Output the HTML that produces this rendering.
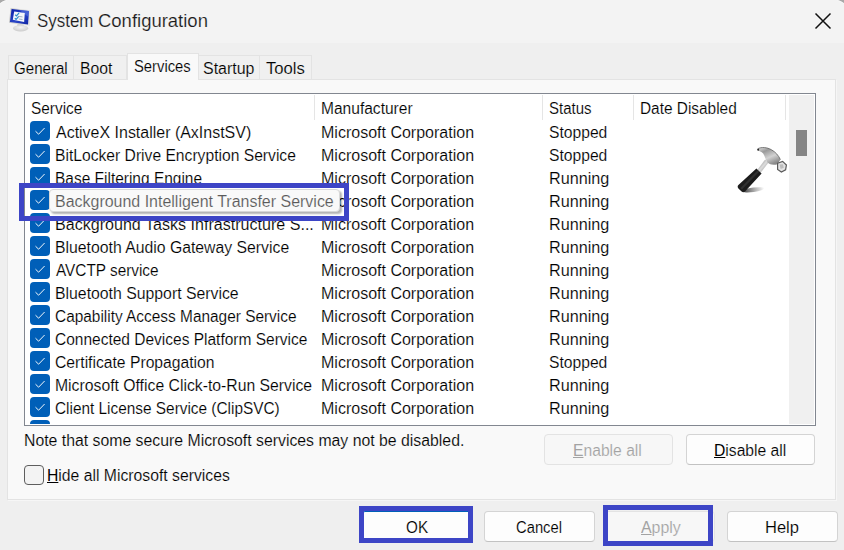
<!DOCTYPE html>
<html><head><meta charset="utf-8">
<style>
*{margin:0;padding:0;box-sizing:border-box}
html,body{width:844px;height:550px;overflow:hidden;background:#efefef}
body{position:relative;font-family:"Liberation Sans",sans-serif;font-size:16px;color:#000}
.a{position:absolute;white-space:nowrap;line-height:16px;transform-origin:0 0}
.b{position:absolute}
#title{left:0;top:0;width:844px;height:43px;background:#f3f3f3}
.tab{position:absolute;top:55px;height:24px;background:#f0f0f0;border:1px solid #e3e3e3;border-bottom:none}
.tab.sel{top:53px;height:27px;background:#f9f9f9;z-index:2}
#panel{left:7px;top:79px;width:829px;height:421px;background:#f9f9f9;border:1px solid #e3e3e3;box-shadow:1px 1px 0 #f6f6f6}
#list{left:24px;top:93px;width:792px;height:333px;background:#fff;border:1px solid #828790;overflow:hidden;z-index:1}
.cb{position:absolute;left:30px;width:20px;height:20px;background:#005fb8;border-radius:4px}
.cb svg{position:absolute;left:0;top:0}
.dv{position:absolute;top:95px;width:1px;height:25px;background:#e5e5e5;z-index:3}
.btn{position:absolute;height:31px;background:#fdfdfd;border:1px solid #d4d4d4;border-bottom-color:#c2c2c2;border-radius:4px;z-index:2}
.dis{background:#f7f7f7;border-color:#e3e3e3}
.ann{position:absolute;border:5px solid #3d45c6;z-index:20}
u{text-decoration:underline;text-decoration-thickness:1px;text-underline-offset:1px;-webkit-text-stroke:0}
</style></head><body>
<div id="title" class="b"></div>
<svg class="b" style="left:6px;top:4px" width="30" height="30" viewBox="6 4 30 30">
  <defs>
    <linearGradient id="bz" x1="0" y1="0" x2="1" y2="1"><stop offset="0" stop-color="#0a1fa8"/><stop offset=".55" stop-color="#2a46c8"/><stop offset="1" stop-color="#0d22a0"/></linearGradient>
    <radialGradient id="st" cx=".5" cy=".35" r=".65"><stop offset="0" stop-color="#f4f4f4"/><stop offset="1" stop-color="#cbcbcb"/></radialGradient>
    <linearGradient id="fr" x1="0" y1="0" x2="1" y2="0"><stop offset="0" stop-color="#c8c8c8"/><stop offset="1" stop-color="#e6e6e6"/></linearGradient>
  </defs>
  <path d="M17.5 23.5 L23.5 24.3 L24 27 L17 26.5 Z" fill="#d4d4d4"/>
  <ellipse cx="20.6" cy="28.3" rx="7.6" ry="3.1" fill="url(#st)"/>
  <path d="M10.6 8.1 L30.6 10.2 L30 25.8 L9 22.8 Z" fill="url(#fr)"/>
  <path d="M11.6 9.1 L29 11 L28 24.6 L9.9 22 Z" fill="url(#bz)"/>
  <path d="M19 10 L29 11 L28.6 17 Z" fill="#5d78e0" opacity=".55"/>
  <path d="M14.2 11.6 L24.8 13 L24.1 22 L12.8 19.8 Z" fill="#f4f6fa"/>
  <path d="M15.2 14.8 l1.3 1.1 l2.6 -3" stroke="#2b8ccc" stroke-width="1.2" fill="none"/>
  <path d="M14.8 18.2 l1.3 1.1 l2.6 -3" stroke="#2b8ccc" stroke-width="1.2" fill="none"/>
  <path d="M18.3 16.4 L22.5 16.9 M18.8 19 L22.5 19.5" stroke="#8aa0b8" stroke-width=".8"/>
</svg>
<svg class="b" style="left:813.5px;top:11.8px" width="18" height="18" viewBox="0 0 18 18"><path d="M1.5 1.5 L16.5 16.5 M16.5 1.5 L1.5 16.5" stroke="#111" stroke-width="1.5"/></svg>

<div id="panel" class="b"></div>
<div class="tab" style="left:8px;width:66px"></div>
<div class="tab" style="left:73px;width:54px"></div>
<div class="tab sel" style="left:127px;width:72px"></div>
<div class="tab" style="left:198px;width:62px"></div>
<div class="tab" style="left:259px;width:53px"></div>

<div id="list" class="b"></div>
<div class="dv" style="left:314px"></div>
<div class="dv" style="left:542px"></div>
<div class="dv" style="left:633px"></div>
<div class="dv" style="left:785px"></div>
<div class="b" style="left:789px;top:95px;width:25px;height:329px;background:#f0f0f0;z-index:3"></div>
<div class="b" style="left:796px;top:130px;width:11px;height:26px;background:#858585;z-index:3"></div>
<div class="b" style="left:0;top:94px;width:815px;height:330px;overflow:hidden;z-index:4">
<div class="cb" style="top:27px"><svg width="20" height="20" viewBox="0 0 20 20"><path d="M5.5 10.2 L8.6 13.2 L14.6 7" stroke="#fff" stroke-width="0.95" fill="none"/></svg></div>
<div class="cb" style="top:50px"><svg width="20" height="20" viewBox="0 0 20 20"><path d="M5.5 10.2 L8.6 13.2 L14.6 7" stroke="#fff" stroke-width="0.95" fill="none"/></svg></div>
<div class="cb" style="top:73px"><svg width="20" height="20" viewBox="0 0 20 20"><path d="M5.5 10.2 L8.6 13.2 L14.6 7" stroke="#fff" stroke-width="0.95" fill="none"/></svg></div>
<div class="cb" style="top:96px"><svg width="20" height="20" viewBox="0 0 20 20"><path d="M5.5 10.2 L8.6 13.2 L14.6 7" stroke="#fff" stroke-width="0.95" fill="none"/></svg></div>
<div class="cb" style="top:119px"><svg width="20" height="20" viewBox="0 0 20 20"><path d="M5.5 10.2 L8.6 13.2 L14.6 7" stroke="#fff" stroke-width="0.95" fill="none"/></svg></div>
<div class="cb" style="top:142px"><svg width="20" height="20" viewBox="0 0 20 20"><path d="M5.5 10.2 L8.6 13.2 L14.6 7" stroke="#fff" stroke-width="0.95" fill="none"/></svg></div>
<div class="cb" style="top:165px"><svg width="20" height="20" viewBox="0 0 20 20"><path d="M5.5 10.2 L8.6 13.2 L14.6 7" stroke="#fff" stroke-width="0.95" fill="none"/></svg></div>
<div class="cb" style="top:188px"><svg width="20" height="20" viewBox="0 0 20 20"><path d="M5.5 10.2 L8.6 13.2 L14.6 7" stroke="#fff" stroke-width="0.95" fill="none"/></svg></div>
<div class="cb" style="top:211px"><svg width="20" height="20" viewBox="0 0 20 20"><path d="M5.5 10.2 L8.6 13.2 L14.6 7" stroke="#fff" stroke-width="0.95" fill="none"/></svg></div>
<div class="cb" style="top:234px"><svg width="20" height="20" viewBox="0 0 20 20"><path d="M5.5 10.2 L8.6 13.2 L14.6 7" stroke="#fff" stroke-width="0.95" fill="none"/></svg></div>
<div class="cb" style="top:257px"><svg width="20" height="20" viewBox="0 0 20 20"><path d="M5.5 10.2 L8.6 13.2 L14.6 7" stroke="#fff" stroke-width="0.95" fill="none"/></svg></div>
<div class="cb" style="top:280px"><svg width="20" height="20" viewBox="0 0 20 20"><path d="M5.5 10.2 L8.6 13.2 L14.6 7" stroke="#fff" stroke-width="0.95" fill="none"/></svg></div>
<div class="cb" style="top:303px"><svg width="20" height="20" viewBox="0 0 20 20"><path d="M5.5 10.2 L8.6 13.2 L14.6 7" stroke="#fff" stroke-width="0.95" fill="none"/></svg></div>
<div class="cb" style="top:326px"><svg width="20" height="20" viewBox="0 0 20 20"><path d="M5.5 10.2 L8.6 13.2 L14.6 7" stroke="#fff" stroke-width="0.95" fill="none"/></svg></div>
</div>

<div class="b" style="left:24px;top:465px;width:20px;height:20px;border:1px solid #5e5e5e;border-radius:4px;background:#f3f3f3"></div>

<div class="btn dis" style="left:544px;top:434px;width:129px"></div>
<div class="btn" style="left:686px;top:434px;width:129px"></div>

<div class="btn" style="left:361px;top:511px;width:111px;border-color:#005fb8"></div>
<div class="btn" style="left:484px;top:511px;width:111px"></div>
<div class="btn dis" style="left:604px;top:511px;width:111px"></div>
<div class="btn" style="left:727px;top:511px;width:111px"></div>

<div class="b" style="left:49px;top:189px;width:291px;height:23px;background:#f9f9f9;border:1px solid #d8d8d8;border-radius:4px;box-shadow:2px 2px 2px rgba(0,0,0,.3);z-index:11"></div>

<div class="ann" style="left:19px;top:183px;width:330px;height:38px"></div>
<div class="ann" style="left:359px;top:506px;width:114px;height:37px"></div>
<div class="ann" style="left:603px;top:505px;width:110px;height:41px"></div>
<svg class="b" style="left:730px;top:140px;z-index:6" width="65" height="60" viewBox="730 140 65 60">
  <defs>
    <linearGradient id="hd" x1="0" y1="0" x2="0.6" y2="1"><stop offset="0" stop-color="#e6e6e6"/><stop offset=".3" stop-color="#9a9a9a"/><stop offset=".65" stop-color="#d2d2d2"/><stop offset="1" stop-color="#8a8a8a"/></linearGradient>
    <linearGradient id="nk" x1="0" y1="0" x2="1" y2="1"><stop offset="0" stop-color="#6d6d6d"/><stop offset=".5" stop-color="#dcdcdc"/><stop offset="1" stop-color="#7d7d7d"/></linearGradient>
    <linearGradient id="sh" x1="0" y1="0" x2="1" y2="0"><stop offset="0" stop-color="#000" stop-opacity=".75"/><stop offset=".5" stop-color="#000" stop-opacity=".35"/><stop offset="1" stop-color="#000" stop-opacity="0"/></linearGradient>
  </defs>
  <ellipse cx="753.5" cy="189.8" rx="11" ry="2.2" fill="url(#sh)" transform="rotate(-8 753.5 189.8)"/>
  <path d="M765.2 159.4 L768.6 162.6 L760.8 172.4 L757.6 169.4 Z" fill="url(#nk)"/>
  <path d="M756.4 168.6 L761.6 173.4 L745 191.4 C744 192.4 742.6 192.4 741.6 191.4 L738.4 188.4 C737.4 187.4 737.4 186 738.4 185 Z" fill="#1c1c1c"/>
  <path d="M757.8 170 L759.4 171.5 L742 189.6 L740.4 188.1 Z" fill="#444" opacity=".5"/>
  <path d="M757 149.6 C759.5 147 766 146.8 771.5 149.8 C775.5 152 778.6 155.6 780.4 159.6 L777.6 164.2 C774 165.4 770 165 767.6 162.6 C765.6 160.4 765 156.6 763.2 153.6 C761.6 151.6 759 151.6 757 149.6 Z" fill="url(#hd)"/>
  <path d="M757.6 148.8 C761.5 146.8 767 147.2 771.5 149.8 C775.5 152 778.6 155.6 780.4 159.6" stroke="#5e5e5e" stroke-width=".8" fill="none"/>
  <circle cx="758.2" cy="149.8" r="1" fill="#2a2a2a"/>
  <path d="M777.6 163.2 L782.6 161.4 L786.4 165 L785.6 169.8 L781.4 172 L777.6 169.4 Z" fill="#e4e4e4" stroke="#5a5a5a" stroke-width="1.2"/>
  <path d="M779.6 164.6 L783 164.2 L783.8 167.8 L780.6 169 Z" fill="#bdbdbd"/>
</svg>
<svg class="b" style="left:0;top:0;z-index:30" width="844" height="8" viewBox="0 0 844 8">
  <path d="M0 0 L7 0 C4.5 0.7 2 1.8 0 3.4 Z" fill="#a9a9a9"/>
  <path d="M7 0.2 C4.5 0.9 2 2 0 3.6" stroke="#fafafa" stroke-width=".8" fill="none"/>
  <path d="M844 0 L837 0 C839.5 0.7 842 1.8 844 3.4 Z" fill="#a9a9a9"/>
  <path d="M837 0.2 C839.5 0.9 842 2 844 3.6" stroke="#fafafa" stroke-width=".8" fill="none"/>
</svg>
<div class="a" style="left:36.64px;top:13px;font-size:17.7px;color:#1b1b1b;z-index:5;transform:scaleX(0.9561);-webkit-text-stroke:0.15px #f3f3f3;">System</div>
<div class="a" style="left:98.16px;top:13px;font-size:17.7px;color:#1b1b1b;z-index:5;transform:scaleX(1.0447);-webkit-text-stroke:0.15px #f3f3f3;">Configuration</div>
<div class="a" style="left:13.66px;top:61px;font-size:16px;color:#000;z-index:5;transform:scaleX(0.9436);-webkit-text-stroke:0.15px #f0f0f0;">General</div>
<div class="a" style="left:79.62px;top:61px;font-size:16px;color:#000;z-index:5;transform:scaleX(0.9813);-webkit-text-stroke:0.15px #f0f0f0;">Boot</div>
<div class="a" style="left:134.28px;top:59px;font-size:16px;color:#000;z-index:5;transform:scaleX(0.9233);-webkit-text-stroke:0.15px #f9f9f9;">Services</div>
<div class="a" style="left:202.60px;top:61px;font-size:16px;color:#000;z-index:5;transform:scaleX(0.9960);-webkit-text-stroke:0.15px #f0f0f0;">Startup</div>
<div class="a" style="left:266.30px;top:61px;font-size:16px;color:#000;z-index:5;transform:scaleX(1.0405);-webkit-text-stroke:0.15px #f0f0f0;">Tools</div>
<div class="a" style="left:31.04px;top:101px;font-size:16px;color:#000;z-index:5;transform:scaleX(0.9615);-webkit-text-stroke:0.15px #fff;">Service</div>
<div class="a" style="left:320.63px;top:101px;font-size:16px;color:#000;z-index:5;transform:scaleX(0.9720);-webkit-text-stroke:0.15px #fff;">Manufacturer</div>
<div class="a" style="left:548.66px;top:101px;font-size:16px;color:#000;z-index:5;transform:scaleX(0.9364);-webkit-text-stroke:0.15px #fff;">Status</div>
<div class="a" style="left:640.04px;top:101px;font-size:16px;color:#000;z-index:5;transform:scaleX(0.9626);-webkit-text-stroke:0.15px #fff;">Date Disabled</div>
<div class="a" style="left:55.80px;top:125px;font-size:16px;color:#000;z-index:5;transform:scaleX(0.9979);-webkit-text-stroke:0.15px #fff;">ActiveX Installer (AxInstSV)</div>
<div class="a" style="left:320.60px;top:125px;font-size:16px;color:#000;z-index:5;transform:scaleX(1.0007);-webkit-text-stroke:0.15px #fff;">Microsoft Corporation</div>
<div class="a" style="left:548.82px;top:125px;font-size:16px;color:#000;z-index:5;transform:scaleX(0.9776);-webkit-text-stroke:0.15px #fff;">Stopped</div>
<div class="a" style="left:54.82px;top:148px;font-size:16px;color:#000;z-index:5;transform:scaleX(0.9780);-webkit-text-stroke:0.15px #fff;">BitLocker Drive Encryption Service</div>
<div class="a" style="left:320.60px;top:148px;font-size:16px;color:#000;z-index:5;transform:scaleX(1.0007);-webkit-text-stroke:0.15px #fff;">Microsoft Corporation</div>
<div class="a" style="left:548.82px;top:148px;font-size:16px;color:#000;z-index:5;transform:scaleX(0.9776);-webkit-text-stroke:0.15px #fff;">Stopped</div>
<div class="a" style="left:54.83px;top:171px;font-size:16px;color:#000;z-index:5;transform:scaleX(0.9669);-webkit-text-stroke:0.15px #fff;">Base Filtering Engine</div>
<div class="a" style="left:320.60px;top:171px;font-size:16px;color:#000;z-index:5;transform:scaleX(1.0007);-webkit-text-stroke:0.15px #fff;">Microsoft Corporation</div>
<div class="a" style="left:548.79px;top:171px;font-size:16px;color:#000;z-index:5;transform:scaleX(1.0121);-webkit-text-stroke:0.15px #fff;">Running</div>
<div class="a" style="left:320.60px;top:194px;font-size:16px;color:#000;z-index:5;transform:scaleX(1.0007);-webkit-text-stroke:0.15px #fff;">Microsoft Corporation</div>
<div class="a" style="left:548.79px;top:194px;font-size:16px;color:#000;z-index:5;transform:scaleX(1.0121);-webkit-text-stroke:0.15px #fff;">Running</div>
<div class="a" style="left:54.80px;top:217px;font-size:16px;color:#000;z-index:5;transform:scaleX(1.0047);-webkit-text-stroke:0.15px #fff;">Background Tasks Infrastructure S...</div>
<div class="a" style="left:320.60px;top:217px;font-size:16px;color:#000;z-index:5;transform:scaleX(1.0007);-webkit-text-stroke:0.15px #fff;">Microsoft Corporation</div>
<div class="a" style="left:548.79px;top:217px;font-size:16px;color:#000;z-index:5;transform:scaleX(1.0121);-webkit-text-stroke:0.15px #fff;">Running</div>
<div class="a" style="left:54.81px;top:240px;font-size:16px;color:#000;z-index:5;transform:scaleX(0.9860);-webkit-text-stroke:0.15px #fff;">Bluetooth Audio Gateway Service</div>
<div class="a" style="left:320.60px;top:240px;font-size:16px;color:#000;z-index:5;transform:scaleX(1.0007);-webkit-text-stroke:0.15px #fff;">Microsoft Corporation</div>
<div class="a" style="left:548.79px;top:240px;font-size:16px;color:#000;z-index:5;transform:scaleX(1.0121);-webkit-text-stroke:0.15px #fff;">Running</div>
<div class="a" style="left:55.80px;top:263px;font-size:16px;color:#000;z-index:5;transform:scaleX(0.9585);-webkit-text-stroke:0.15px #fff;">AVCTP service</div>
<div class="a" style="left:320.60px;top:263px;font-size:16px;color:#000;z-index:5;transform:scaleX(1.0007);-webkit-text-stroke:0.15px #fff;">Microsoft Corporation</div>
<div class="a" style="left:548.79px;top:263px;font-size:16px;color:#000;z-index:5;transform:scaleX(1.0121);-webkit-text-stroke:0.15px #fff;">Running</div>
<div class="a" style="left:54.81px;top:286px;font-size:16px;color:#000;z-index:5;transform:scaleX(0.9880);-webkit-text-stroke:0.15px #fff;">Bluetooth Support Service</div>
<div class="a" style="left:320.60px;top:286px;font-size:16px;color:#000;z-index:5;transform:scaleX(1.0007);-webkit-text-stroke:0.15px #fff;">Microsoft Corporation</div>
<div class="a" style="left:548.79px;top:286px;font-size:16px;color:#000;z-index:5;transform:scaleX(1.0121);-webkit-text-stroke:0.15px #fff;">Running</div>
<div class="a" style="left:54.84px;top:309px;font-size:16px;color:#000;z-index:5;transform:scaleX(0.9631);-webkit-text-stroke:0.15px #fff;">Capability Access Manager Service</div>
<div class="a" style="left:320.60px;top:309px;font-size:16px;color:#000;z-index:5;transform:scaleX(1.0007);-webkit-text-stroke:0.15px #fff;">Microsoft Corporation</div>
<div class="a" style="left:548.79px;top:309px;font-size:16px;color:#000;z-index:5;transform:scaleX(1.0121);-webkit-text-stroke:0.15px #fff;">Running</div>
<div class="a" style="left:54.83px;top:332px;font-size:16px;color:#000;z-index:5;transform:scaleX(0.9687);-webkit-text-stroke:0.15px #fff;">Connected Devices Platform Service</div>
<div class="a" style="left:320.60px;top:332px;font-size:16px;color:#000;z-index:5;transform:scaleX(1.0007);-webkit-text-stroke:0.15px #fff;">Microsoft Corporation</div>
<div class="a" style="left:548.79px;top:332px;font-size:16px;color:#000;z-index:5;transform:scaleX(1.0121);-webkit-text-stroke:0.15px #fff;">Running</div>
<div class="a" style="left:54.82px;top:355px;font-size:16px;color:#000;z-index:5;transform:scaleX(0.9801);-webkit-text-stroke:0.15px #fff;">Certificate Propagation</div>
<div class="a" style="left:320.60px;top:355px;font-size:16px;color:#000;z-index:5;transform:scaleX(1.0007);-webkit-text-stroke:0.15px #fff;">Microsoft Corporation</div>
<div class="a" style="left:548.82px;top:355px;font-size:16px;color:#000;z-index:5;transform:scaleX(0.9776);-webkit-text-stroke:0.15px #fff;">Stopped</div>
<div class="a" style="left:54.82px;top:378px;font-size:16px;color:#000;z-index:5;transform:scaleX(0.9846);-webkit-text-stroke:0.15px #fff;">Microsoft Office Click-to-Run Service</div>
<div class="a" style="left:320.60px;top:378px;font-size:16px;color:#000;z-index:5;transform:scaleX(1.0007);-webkit-text-stroke:0.15px #fff;">Microsoft Corporation</div>
<div class="a" style="left:548.79px;top:378px;font-size:16px;color:#000;z-index:5;transform:scaleX(1.0121);-webkit-text-stroke:0.15px #fff;">Running</div>
<div class="a" style="left:54.84px;top:401px;font-size:16px;color:#000;z-index:5;transform:scaleX(0.9608);-webkit-text-stroke:0.15px #fff;">Client License Service (ClipSVC)</div>
<div class="a" style="left:320.60px;top:401px;font-size:16px;color:#000;z-index:5;transform:scaleX(1.0007);-webkit-text-stroke:0.15px #fff;">Microsoft Corporation</div>
<div class="a" style="left:548.79px;top:401px;font-size:16px;color:#000;z-index:5;transform:scaleX(1.0121);-webkit-text-stroke:0.15px #fff;">Running</div>
<div class="a" style="left:54.50px;top:194px;font-size:16px;color:#5a5a5a;z-index:12;transform:scaleX(0.9982);-webkit-text-stroke:0.15px #f9f9f9;">Background Intelligent Transfer Service</div>
<div class="a" style="left:23.51px;top:433px;font-size:16px;color:#000;z-index:5;transform:scaleX(0.9883);-webkit-text-stroke:0.15px #f9f9f9;">Note that some secure Microsoft services may not be disabled.</div>
<div class="a" style="left:47.02px;top:468px;font-size:16px;color:#000;z-index:5;transform:scaleX(0.9837);-webkit-text-stroke:0.15px #f9f9f9;"><u>H</u>ide all Microsoft services</div>
<div class="a" style="left:573.42px;top:443px;font-size:16px;color:#a3a3a3;z-index:5;transform:scaleX(0.9794);-webkit-text-stroke:0.15px #f7f7f7;"><u>E</u>nable all</div>
<div class="a" style="left:713.52px;top:443px;font-size:16px;color:#000;z-index:5;transform:scaleX(0.9792);-webkit-text-stroke:0.15px #fdfdfd;"><u>D</u>isable all</div>
<div class="a" style="left:406.05px;top:520px;font-size:16px;color:#000;z-index:5;transform:scaleX(0.9545);-webkit-text-stroke:0.15px #fdfdfd;">OK</div>
<div class="a" style="left:515.78px;top:520px;font-size:16px;color:#000;z-index:5;transform:scaleX(0.9229);-webkit-text-stroke:0.15px #fdfdfd;">Cancel</div>
<div class="a" style="left:640.60px;top:520px;font-size:16px;color:#a3a3a3;z-index:5;transform:scaleX(0.9950);-webkit-text-stroke:0.15px #f7f7f7;"><u>A</u>pply</div>
<div class="a" style="left:764.97px;top:520px;font-size:16px;color:#000;z-index:5;transform:scaleX(1.0323);-webkit-text-stroke:0.15px #fdfdfd;">Help</div>
</body></html>
